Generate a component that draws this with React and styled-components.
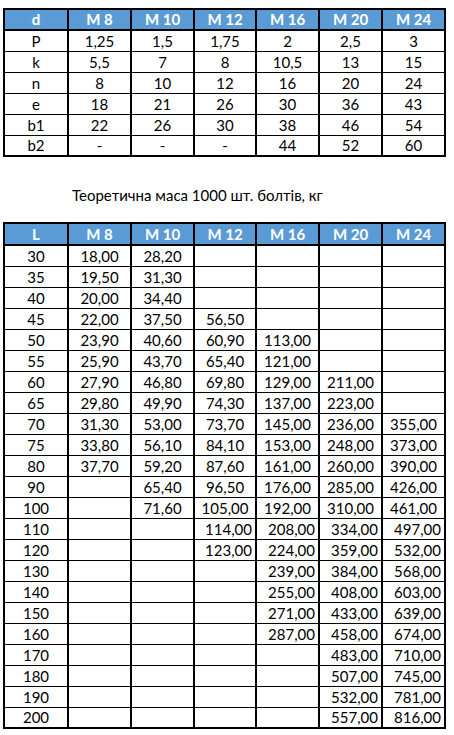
import React from "react";
import styled, { createGlobalStyle } from "styled-components";

const Global = createGlobalStyle`
  html, body { margin: 0; padding: 0; background: #fff; }
  body { font-family: Lato, "Open Sans", sans-serif; color: #000; }
`;

const Page = styled.div`
  width: 454px;
  padding: 8px 0 0 3px;
  box-sizing: border-box;
`;

const Table = styled.table`
  border-collapse: collapse;
  table-layout: fixed;
  width: 441px;
  font-size: 15px;
`;

const Col = styled.col`
  width: ${(p) => p.$w}px;
`;

const HeadCell = styled.th`
  background: #5b9bd5;
  color: #fff;
  font-weight: 700;
  height: ${(p) => p.$h || 21}px;
  box-sizing: border-box;
  padding: 0;
  text-align: center;
  border: 2px solid #000;
  line-height: 1;
`;

const Cell = styled.td`
  height: 21px;
  box-sizing: border-box;
  padding: 1px ${(p) => (p.$right ? "3px" : "0")} 0 0;
  text-align: ${(p) => (p.$right ? "right" : "center")};
  border-left: 2px solid #000;
  border-right: 2px solid #000;
  border-top: 1px solid #000;
  border-bottom: 1px solid #000;
  line-height: 1;
  white-space: nowrap;
`;

const Row = styled.tr`
  &:last-child td { border-bottom: 2px solid #000; }
`;

const Caption = styled.div`
  font-size: 15px;
  padding: 31px 0 0 69px;
  height: 34px;
  line-height: 1;
`;

const widths = [64, 63, 63, 62, 63, 63, 63];
const heads = ["M 8", "M 10", "M 12", "M 16", "M 20", "M 24"];

const dims = [
  ["P", "1,25", "1,5", "1,75", "2", "2,5", "3"],
  ["k", "5,5", "7", "8", "10,5", "13", "15"],
  ["n", "8", "10", "12", "16", "20", "24"],
  ["e", "18", "21", "26", "30", "36", "43"],
  ["b1", "22", "26", "30", "38", "46", "54"],
  ["b2", "-", "-", "-", "44", "52", "60"],
];

const mass = [
  ["30", "18,00", "28,20", "", "", "", ""],
  ["35", "19,50", "31,30", "", "", "", ""],
  ["40", "20,00", "34,40", "", "", "", ""],
  ["45", "22,00", "37,50", "56,50", "", "", ""],
  ["50", "23,90", "40,60", "60,90", "113,00", "", ""],
  ["55", "25,90", "43,70", "65,40", "121,00", "", ""],
  ["60", "27,90", "46,80", "69,80", "129,00", "211,00", ""],
  ["65", "29,80", "49,90", "74,30", "137,00", "223,00", ""],
  ["70", "31,30", "53,00", "73,70", "145,00", "236,00", "355,00"],
  ["75", "33,80", "56,10", "84,10", "153,00", "248,00", "373,00"],
  ["80", "37,70", "59,20", "87,60", "161,00", "260,00", "390,00"],
  ["90", "", "65,40", "96,50", "176,00", "285,00", "426,00"],
  ["100", "", "71,60", "105,00", "192,00", "310,00", "461,00"],
  ["110", "", "", "114,00", "208,00", "334,00", "497,00"],
  ["120", "", "", "123,00", "224,00", "359,00", "532,00"],
  ["130", "", "", "", "239,00", "384,00", "568,00"],
  ["140", "", "", "", "255,00", "408,00", "603,00"],
  ["150", "", "", "", "271,00", "433,00", "639,00"],
  ["160", "", "", "", "287,00", "458,00", "674,00"],
  ["170", "", "", "", "", "483,00", "710,00"],
  ["180", "", "", "", "", "507,00", "745,00"],
  ["190", "", "", "", "", "532,00", "781,00"],
  ["200", "", "", "", "", "557,00", "816,00"],
];

function Cols() {
  return (
    <colgroup>
      {widths.map((w, i) => (
        <Col key={i} $w={w} />
      ))}
    </colgroup>
  );
}

export default function App() {
  return (
    <>
      <Global />
      <Page>
        <Table>
          <Cols />
          <thead>
            <tr>
              <HeadCell>d</HeadCell>
              {heads.map((h) => (
                <HeadCell key={h}>{h}</HeadCell>
              ))}
            </tr>
          </thead>
          <tbody>
            {dims.map((r) => (
              <Row key={r[0]}>
                {r.map((v, i) => (
                  <Cell key={i}>{v}</Cell>
                ))}
              </Row>
            ))}
          </tbody>
        </Table>
        <Caption>Теоретична маса 1000 шт. болтів, кг</Caption>
        <Table>
          <Cols />
          <thead>
            <tr>
              <HeadCell $h={22}>L</HeadCell>
              {heads.map((h) => (
                <HeadCell key={h} $h={22}>
                  {h}
                </HeadCell>
              ))}
            </tr>
          </thead>
          <tbody>
            {mass.map((r, ri) => (
              <Row key={r[0]}>
                {r.map((v, i) => (
                  <Cell key={i} $right={i > 0 && ri >= 13}>
                    {v}
                  </Cell>
                ))}
              </Row>
            ))}
          </tbody>
        </Table>
      </Page>
    </>
  );
}
